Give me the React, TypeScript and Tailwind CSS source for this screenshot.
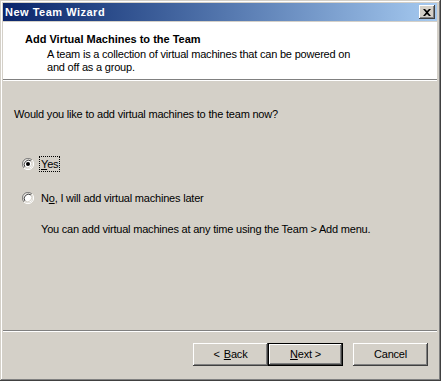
import React from "react";

const font = "font-['Liberation_Sans',Arial,sans-serif]";

function Radio({ checked }: { checked?: boolean }) {
  return (
    <svg width="12" height="12" viewBox="0 0 12 12" className="shrink-0">
      <path d="M10 2 A5.5 5.5 0 0 0 2 10" fill="none" stroke="#808080" strokeWidth="1" />
      <path d="M2 10 A5.5 5.5 0 0 0 10 2" fill="none" stroke="#ffffff" strokeWidth="1" />
      <circle cx="6" cy="6" r="4.5" fill="#ffffff" />
      <path d="M9 3 A4.3 4.3 0 0 0 3 9" fill="none" stroke="#404040" strokeWidth="1" />
      <path d="M3 9 A4.3 4.3 0 0 0 9 3" fill="none" stroke="#d4d0c8" strokeWidth="1" />
      {checked && <circle cx="6" cy="6" r="2" fill="#000000" />}
    </svg>
  );
}

function Button({
  children,
  isDefault,
}: {
  children: React.ReactNode;
  isDefault?: boolean;
}) {
  return (
    <button
      className={
        isDefault
          ? "flex h-[23px] w-[75px] items-center justify-center border border-black bg-[#d4d0c8] text-[11px] text-black shadow-[inset_-1px_-1px_#404040,inset_1px_1px_#fff,inset_-2px_-2px_#808080]"
          : "flex h-[23px] w-[75px] items-center justify-center bg-[#d4d0c8] text-[11px] text-black shadow-[inset_-1px_-1px_#404040,inset_1px_1px_#fff,inset_-2px_-2px_#808080,inset_2px_2px_#d4d0c8]"
      }
    >
      {children}
    </button>
  );
}

export default function App() {
  return (
    <div
      className={`${font} flex h-[381px] w-[441px] flex-col bg-[#d4d0c8] pb-[4px] pl-[3px] pr-[4px] pt-[3px] text-[11px] tracking-[-0.2px] text-black shadow-[inset_-1px_-1px_#404040,inset_1px_1px_#d4d0c8,inset_-2px_-2px_#808080,inset_2px_2px_#fff]`}
    >
      {/* title bar */}
      <div className="flex h-[18px] items-center justify-between bg-gradient-to-r from-[#0a246a] to-[#a6caf0] pl-[2px] pr-[2px]">
        <span className="text-[11px] font-bold tracking-[0.5px] text-white">New Team Wizard</span>
        <div className="flex h-[14px] w-[16px] items-center justify-center bg-[#d4d0c8] shadow-[inset_-1px_-1px_#404040,inset_1px_1px_#fff,inset_-2px_-2px_#808080]">
          <svg width="8" height="7" viewBox="0 0 8 7">
            <path d="M0 0h2l2 2 2-2h2L5 3.5 8 7H6L4 5 2 7H0l3-3.5z" fill="#000" />
          </svg>
        </div>
      </div>

      {/* header */}
      <div className="mt-px h-[58px] border-b border-[#808080] bg-white pt-[10px]">
        <div className="pl-[22px] text-[11px] font-bold leading-[14px] tracking-normal">
          Add Virtual Machines to the Team
        </div>
        <div className="pl-[44px] pt-[2px] leading-[13px]">
          A team is a collection of virtual machines that can be powered on
          <br />
          and off as a group.
        </div>
      </div>
      <div className="h-px bg-white" />

      {/* body */}
      <div className="flex flex-1 flex-col pl-[11px] pt-[27px]">
        <div className="leading-[13px]">Would you like to add virtual machines to the team now?</div>

        <div className="mt-[35px] flex items-center pl-[8px]">
          <Radio checked />
          <span className="ml-[5px] border border-dotted border-black px-px leading-[14px]">
            <span className="underline">Y</span>es
          </span>
        </div>

        <div className="mt-[19px] flex items-center pl-[8px]">
          <Radio />
          <span className="ml-[7px] leading-[14px]">
            N<span className="underline">o</span>, I will add virtual machines later
          </span>
        </div>

        <div className="mt-[18px] pl-[27px] leading-[13px]">
          You can add virtual machines at any time using the Team &gt; Add menu.
        </div>
      </div>

      {/* footer */}
      <div className="border-t border-[#808080]">
        <div className="h-px bg-white" />
        <div className="flex h-[45px] items-start justify-end gap-[10px] pr-[9px] pt-[11px]">
          <div className="flex">
            <Button>
              &lt; <span className="ml-1 underline">B</span>ack
            </Button>
            <Button isDefault>
              <span className="underline">N</span>ext &gt;
            </Button>
          </div>
          <Button>Cancel</Button>
        </div>
      </div>
    </div>
  );
}
